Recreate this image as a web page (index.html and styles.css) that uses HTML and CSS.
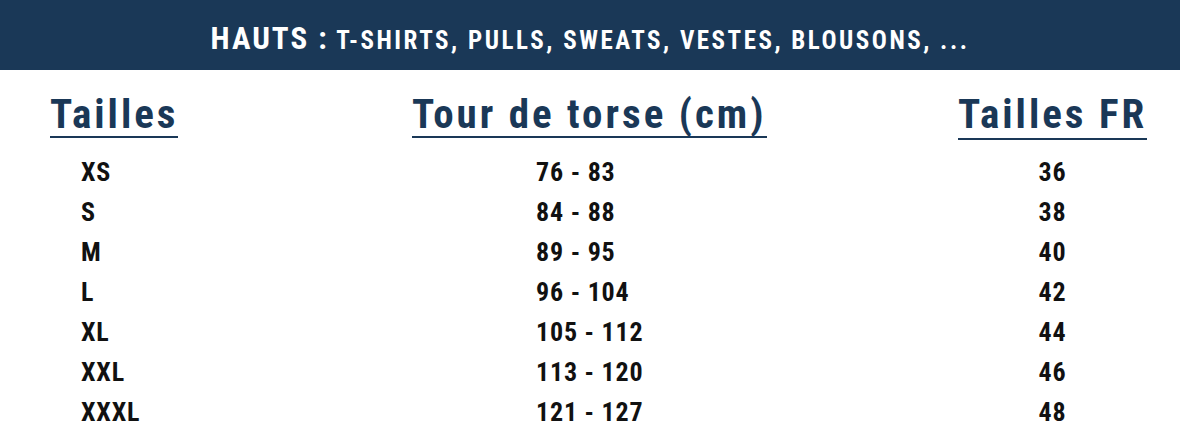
FILE: index.html
```html
<!DOCTYPE html>
<html lang="fr">
<head>
<meta charset="utf-8">
<title>Guide des tailles – Hauts</title>
<link rel="stylesheet" href="styles.css">
</head>
<body>
<header class="band">
  <h1 class="band-title"><span class="band-main">HAUTS :</span> <span class="band-sub">T-SHIRTS, PULLS, SWEATS, VESTES, BLOUSONS, ...</span></h1>
</header>
<main class="table">
  <div class="col col-size">
    <h2 class="col-head">Tailles</h2>
    <ul class="col-list">
      <li>XS</li><li>S</li><li>M</li><li>L</li><li>XL</li><li>XXL</li><li>XXXL</li>
    </ul>
  </div>
  <div class="col col-chest">
    <h2 class="col-head">Tour de torse (cm)</h2>
    <ul class="col-list">
      <li>76 - 83</li><li>84 - 88</li><li>89 - 95</li><li>96 - 104</li><li>105 - 112</li><li>113 - 120</li><li>121 - 127</li>
    </ul>
  </div>
  <div class="col col-fr">
    <h2 class="col-head">Tailles FR</h2>
    <ul class="col-list">
      <li>36</li><li>38</li><li>40</li><li>42</li><li>44</li><li>46</li><li>48</li>
    </ul>
  </div>
</main>
</body>
</html>
```
FILE: styles.css
```css
html, body {
  margin: 0;
  padding: 0;
  background: #ffffff;
}
body {
  width: 1180px;
  height: 440px;
  overflow: hidden;
  font-family: "Roboto Condensed", "Liberation Sans Narrow", "DejaVu Sans Condensed", "Roboto", sans-serif;
  font-stretch: condensed;
  font-weight: 700;
}
.band {
  height: 70px;
  background: #1a3857;
  display: flex;
  align-items: center;
  justify-content: center;
}
.band-title {
  margin: 0;
  color: #ffffff;
  font-weight: 700;
  line-height: 1;
  padding-top: 6px;
}
.band-main { font-size: 31px; letter-spacing: 2px; }
.band-sub { font-size: 25px; letter-spacing: 2.5px; }
.table {
  display: grid;
  grid-template-columns: 362px 546px max-content;
  padding-left: 50px;
  padding-top: 22px;
}
.col { display: flex; flex-direction: column; align-items: flex-start; }
.col-head {
  margin: 0;
  color: #1a3857;
  font-size: 41px;
  letter-spacing: 3px;
  line-height: 44px;
  white-space: nowrap;
  border-bottom: 2px solid #1a3857;
}
.col-list {
  list-style: none;
  margin: 14px 0 0;
  padding: 0;
  color: #111111;
  font-size: 26px;
  letter-spacing: 0.8px;
}
.col-list li { height: 40px; line-height: 40px; white-space: nowrap; }
.col-size .col-list { padding-left: 31px; }
.col-chest .col-list { padding-left: 124px; }
.col-fr { align-items: stretch; }
.col-fr .col-head { padding-bottom: 2px; }
.col-fr .col-list { text-align: center; margin-top: 12px; }
```
